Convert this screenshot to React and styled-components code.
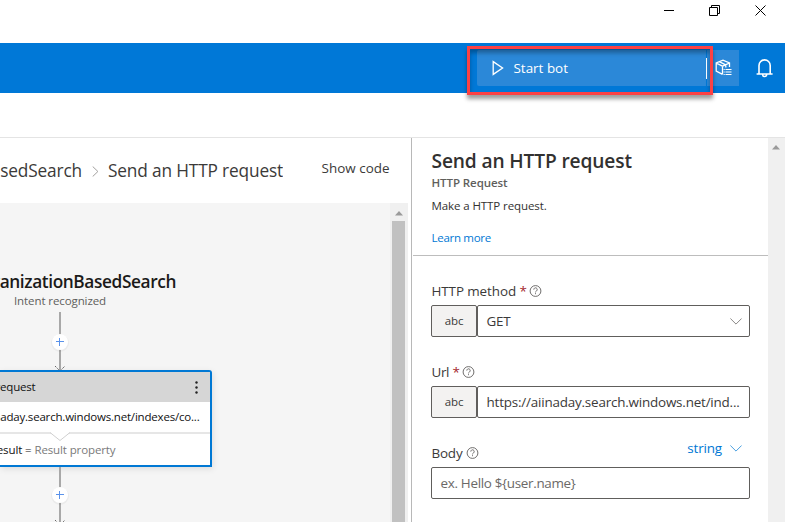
import React from 'react';
import styled, { createGlobalStyle } from 'styled-components';

const GlobalStyle = createGlobalStyle`
  * { box-sizing: border-box; }
  body { margin: 0; overflow: hidden; background: #fff; font-family: "Open Sans", "Noto Sans", sans-serif; }
  svg { display: block; flex: none; }
`;

const Window = styled.div`
  position: relative;
  width: 785px;
  height: 522px;
  display: flex;
  flex-direction: column;
  overflow: hidden;
`;

const TitleBar = styled.div`
  height: 43px;
  flex: none;
  display: flex;
  justify-content: flex-end;
  align-items: flex-start;
  gap: 35px;
  padding: 5px 19px 0 0;
`;

const AppBar = styled.header`
  height: 50px;
  flex: none;
  display: flex;
  justify-content: flex-end;
  align-items: center;
  background: #0078d7;
  padding-right: 12px;
`;

const StartButton = styled.button`
  width: 229px;
  height: 36px;
  border: 0;
  border-radius: 2px 0 0 2px;
  padding: 0 0 0 15px;
  margin-bottom: 1px;
  display: flex;
  align-items: center;
  gap: 9.5px;
  background: #2b88d8;
  color: #fff;
  font: 400 13.44px/36px "Open Sans", sans-serif;
`;

const SplitDivider = styled.span`
  width: 1px;
  height: 21px;
  background: #fff;
`;

const PackageButton = styled.button`
  width: 32px;
  height: 36px;
  border: 0;
  margin: 0 17px 1px 0;
  padding: 0 0 0 8px;
  display: flex;
  align-items: center;
  background: #2b88d8;
`;

const Highlight = styled.div`
  position: absolute;
  left: 467px;
  top: 46px;
  width: 246px;
  height: 49px;
  border: 3px solid #fc4144;
  box-shadow: 0 4px 4px rgba(0, 0, 0, 0.38), inset 0 4px 4px rgba(0, 0, 0, 0.3);
`;

const Toolbar = styled.div`
  height: 45px;
  flex: none;
  border-bottom: 1px solid #e4e4e4;
`;

const Main = styled.main`
  flex: 1;
  min-height: 0;
  display: flex;
`;

const Editor = styled.section`
  width: 411px;
  flex: none;
  display: flex;
  flex-direction: column;
`;

const Breadcrumbs = styled.nav`
  height: 65px;
  flex: none;
  display: flex;
  justify-content: space-between;
  padding-right: 21.5px;
`;

const Trail = styled.div`
  display: flex;
  align-items: center;
  height: 65px;
  width: 283px;
  justify-content: flex-end;
  overflow: hidden;
  white-space: nowrap;
  color: #3b3a39;
  font-size: 17.3px;
  letter-spacing: -0.16px;
  line-height: 65px;
  svg { margin: 1px 9px 0 10px; }
`;

const ShowCode = styled.span`
  color: #3b3a39;
  font-size: 13.44px;
  line-height: 60px;
`;

const CanvasFrame = styled.div`
  flex: 1;
  min-height: 0;
  width: 408px;
  display: flex;
  background: #f5f5f5;
`;

const Flow = styled.div`
  flex: 1;
  min-width: 0;
  padding-top: 66px;
  overflow: hidden;
`;

const TriggerName = styled.div`
  width: 176px;
  display: flex;
  justify-content: flex-end;
  white-space: nowrap;
  font-size: 17.3px;
  font-weight: 600;
  letter-spacing: -0.4px;
  line-height: 25px;
  color: #1b1a19;
`;

const TriggerKind = styled.div`
  width: 120px;
  text-align: center;
  font-size: 11.52px;
  letter-spacing: -0.1px;
  line-height: 14px;
  padding-bottom: 4px;
  color: #605e5c;
`;

const Connector = styled.div`
  height: ${p => p.$height}px;
`;

const NodeCard = styled.article`
  width: 212px;
  height: 97px;
  border: 2px solid #0078d4;
  border-left: 0;
  border-radius: 0 3px 0 0;
  background: #fff;
  box-shadow: 1px 2px 6px rgba(0, 0, 0, 0.1);
  font-size: 11.52px;
  color: #111;
  white-space: nowrap;
`;

const NodeHeader = styled.div`
  height: 30px;
  display: flex;
  align-items: center;
  justify-content: space-between;
  background: #d6d6d6;
  padding-right: 11px;
  line-height: 30px;
  letter-spacing: -0.2px;
  overflow: hidden;
`;

const Clip = styled.div`
  width: ${p => p.$width}px;
  display: flex;
  justify-content: flex-end;
  overflow: hidden;
`;

const NodeUrl = styled.div`
  height: 30px;
  line-height: 30px;
  letter-spacing: -0.2px;
`;

const NodeResult = styled.div`
  height: 33px;
  line-height: 18px;
  letter-spacing: -0.12px;
  span { white-space: pre; }
  em { font-style: normal; color: #7a7a7a; }
`;

const ScrollBar = styled.div`
  width: ${p => p.$width}px;
  flex: none;
  display: flex;
  flex-direction: column;
  align-items: center;
  background: #f0f0f0;
  padding: ${p => p.$top}px 1px 0 0;
`;

const Thumb = styled.div`
  width: 13px;
  flex: 1;
  margin-top: 5px;
  background: #c1c1c1;
`;

const Panel = styled.aside`
  flex: 1;
  min-width: 0;
  border-left: 1px solid #b8b8b8;
  display: flex;
  flex-direction: column;
`;

const PanelHeader = styled.div`
  height: 118px;
  flex: none;
  margin-left: 1px;
  padding: 9px 0 0 18.5px;
  border-bottom: 1px solid #bdbdbd;
`;

const PanelTitle = styled.h1`
  margin: 0;
  font-size: 19.2px;
  font-weight: 600;
  letter-spacing: -0.15px;
  line-height: 28px;
  color: #323130;
`;

const PanelText = styled.div`
  margin-top: ${p => p.$gap || 0}px;
  font-size: 11.52px;
  font-weight: ${p => p.$weight || 400};
  letter-spacing: ${p => p.$tracking || 0}px;
  line-height: 16px;
  color: ${p => p.$color || '#323130'};
`;

const Field = styled.div`
  margin: 25px 18px 0 19px;
`;

const Label = styled.div`
  height: 20px;
  margin: 0 8px 4px 0.5px;
  display: flex;
  align-items: center;
  font-size: 13.44px;
  letter-spacing: ${p => p.$tracking}px;
  line-height: 20px;
  color: #3b3a39;
`;

const Required = styled.span`
  color: #a4262c;
  margin-left: 3.5px;
  width: 6px;
`;

const Help = styled.span`
  margin-left: 3.5px;
`;

const TypePicker = styled.span`
  margin-left: auto;
  display: flex;
  align-items: center;
  gap: 8px;
  color: #0078d4;
  height: 10px;
  align-self: flex-start;
  letter-spacing: -0.15px;
`;

const InputRow = styled.div`
  height: 32px;
  display: flex;
`;

const TypeBox = styled.div`
  width: 46px;
  border: 1px solid #605e5c;
  border-radius: 2px;
  background: #f3f2f1;
  text-align: center;
  font-size: 11.52px;
  letter-spacing: -0.15px;
  line-height: 29px;
  color: #3b3a39;
`;

const Input = styled.div`
  flex: 1;
  min-width: 0;
  border: 1px solid #605e5c;
  border-radius: 2px;
  padding: 0 7px 0 ${p => p.$indent || 8.5}px;
  display: flex;
  align-items: center;
  justify-content: space-between;
  font-size: 13.44px;
  letter-spacing: ${p => p.$tracking}px;
  line-height: ${p => p.$line || 30}px;
  white-space: nowrap;
  color: ${p => p.$muted ? '#6b6967' : '#3b3a39'};
`;

const HelpIcon = () => (
  <svg width="13" height="13" viewBox="0 0 13 13" fill="none" stroke="#605e5c" strokeWidth="0.9">
    <circle cx="6.5" cy="6" r="5.4" />
    <path d="M4.8 4.6a1.7 1.7 0 1 1 2.7 1.3c-.7.5-1 .8-1 1.5M6.5 8.2v1" />
  </svg>
);

const Chevron = ({ color }) => (
  <svg width="12" height="7" viewBox="0 0 12 7" fill="none" stroke={color} strokeWidth="1">
    <path d="M.4.5 6 6.1 11.6.5" />
  </svg>
);

const ScrollArrow = () => (
  <svg width="8" height="5" viewBox="0 0 8 5"><path d="M4 0 8 4.5H0z" fill="#9a9a9a" /></svg>
);

const FlowLine = ({ height, plusY, tipY }) => (
  <svg width="120" height={height} viewBox={`0 0 120 ${height}`} fill="none">
    <path d={`M60 0V${height}`} stroke="#a8a8a8" strokeWidth="2" />
    <path d={`M55 ${tipY - 5}l5 5 5-5`} stroke="#666" strokeWidth="1" strokeDasharray="1.5 0.8" />
    <circle cx="60" cy={plusY + 1} r="9" fill="#000" opacity="0.04" />
    <circle cx="60" cy={plusY} r="8" fill="#fff" />
    <path d={`M56 ${plusY - 0.5}h8M59.5 ${plusY - 4}v8`} stroke="#5a92ea" strokeWidth="1" />
  </svg>
);

export default function App() {
  return (
    <Window>
      <GlobalStyle />
      <TitleBar>
        <svg width="10" height="11" stroke="#000"><path d="M0 5.5h10" /></svg>
        <svg width="11" height="11" fill="none" stroke="#000"><path d="M.5 2.5h8v8h-8zM2.5 2V.5h8v8H9" /></svg>
        <svg width="11" height="11" stroke="#000"><path d="M.5.5l10 10M10.5.5l-10 10" /></svg>
      </TitleBar>
      <AppBar>
        <StartButton>
          <svg width="12" height="16" viewBox="0 0 12 16" fill="none" stroke="#fff" strokeWidth="1.3">
            <path d="M1.2 1.6 10.6 8 1.2 14.4z" />
          </svg>
          Start bot
        </StartButton>
        <SplitDivider />
        <PackageButton>
          <svg width="17" height="17" viewBox="0 0 17 17" fill="none" stroke="#fff" strokeWidth="1.3">
            <path d="M7.500 15.300 1.200 12V4L8 1.200l6.500 2.800v4M1.200 4l6.300 3.200L14.500 4M7.500 7.200V15.300M4.200 2.600l6.600 3.200v2.600" />
            <path d="M10.500 10.500h6M10.500 13h6M10.500 15.500h6M8.600 10.500H9.700M8.600 13H9.700M8.600 15.500H9.700" strokeWidth="1.1" />
          </svg>
        </PackageButton>
        <svg width="17" height="20" viewBox="0 0 17 20" fill="none" stroke="#fff" strokeWidth="1.6">
          <path d="M.6 16h16M3 16V7.500a5.600 5.600 0 0 1 11.200 0V16M6.600 16.500a2 2 0 0 0 4 0" />
        </svg>
      </AppBar>
      <Highlight />
      <Toolbar />
      <Main>
        <Editor>
          <Breadcrumbs>
            <Trail>
              <span>OrganizationBasedSearch</span>
              <svg width="7" height="11" viewBox="0 0 7 11" fill="none" stroke="#a19f9d"><path d="M.7.500 5.900 5.500.7 10.500" /></svg>
              <span>Send an HTTP request</span>
            </Trail>
            <ShowCode>Show code</ShowCode>
          </Breadcrumbs>
          <CanvasFrame>
            <Flow>
              <TriggerName>OrganizationBasedSearch</TriggerName>
              <TriggerKind>Intent recognized</TriggerKind>
              <Connector $height={58}><FlowLine height={58} plusY={30} tipY={59} /></Connector>
              <NodeCard>
                <NodeHeader>
                  <Clip $width={35.5}><span>Send an HTTP request</span></Clip>
                  <svg width="5" height="13" fill="#222"><circle cx="2.500" cy="1.500" r="1.200" /><circle cx="2.500" cy="6.500" r="1.200" /><circle cx="2.500" cy="11.500" r="1.200" /></svg>
                </NodeHeader>
                <NodeUrl>
                  <Clip $width={199.5}><span>https://aiinaday.search.windows.net/indexes/co...</span></Clip>
                </NodeUrl>
                <svg width="210" height="9" viewBox="0 0 210 9" fill="none">
                  <path d="M0 1h210" stroke="#e6e6e6" strokeWidth="2" />
                  <path d="M50 0h20L60 8.500z" fill="#fff" />
                  <path d="M50 .5 60 8.500 70 .5" stroke="#d0d0d0" strokeWidth="1" />
                </svg>
                <NodeResult>
                  <Clip $width={115.5}><span>Result = <em>Result property</em></span></Clip>
                </NodeResult>
              </NodeCard>
              <Connector $height={55}><FlowLine height={55} plusY={28} tipY={58} /></Connector>
            </Flow>
            <ScrollBar $width={18} $top={8}><ScrollArrow /><Thumb /></ScrollBar>
          </CanvasFrame>
        </Editor>
        <Panel>
          <PanelHeader>
            <PanelTitle>Send an HTTP request</PanelTitle>
            <PanelText $weight={600} $tracking={-0.08} $color="#605e5c">HTTP Request</PanelText>
            <PanelText $gap={7} $tracking={-0.1}>Make a HTTP request.</PanelText>
            <PanelText $gap={16} $tracking={-0.3} $color="#0078d4">Learn more</PanelText>
          </PanelHeader>
          <Field>
            <Label $tracking={-0.1}>HTTP method<Required>*</Required><Help><HelpIcon /></Help></Label>
            <InputRow>
              <TypeBox>abc</TypeBox>
              <Input $tracking={-0.2}>GET<Chevron color="#8a8886" /></Input>
            </InputRow>
          </Field>
          <Field>
            <Label $tracking={-0.4}>Url<Required>*</Required><Help><HelpIcon /></Help></Label>
            <InputRow>
              <TypeBox>abc</TypeBox>
              <Input $tracking={-0.2} $line={32}>https://aiinaday.search.windows.net/ind...</Input>
            </InputRow>
          </Field>
          <Field>
            <Label $tracking={-0.2}>
              Body<Help><HelpIcon /></Help>
              <TypePicker>string<Chevron color="#4ba0e0" /></TypePicker>
            </Label>
            <InputRow>
              <Input $muted $tracking={-0.32} $line={32}>{'ex. Hello ${user.name}'}</Input>
            </InputRow>
          </Field>
        </Panel>
        <ScrollBar $width={17} $top={7}><ScrollArrow /></ScrollBar>
      </Main>
    </Window>
  );
}
